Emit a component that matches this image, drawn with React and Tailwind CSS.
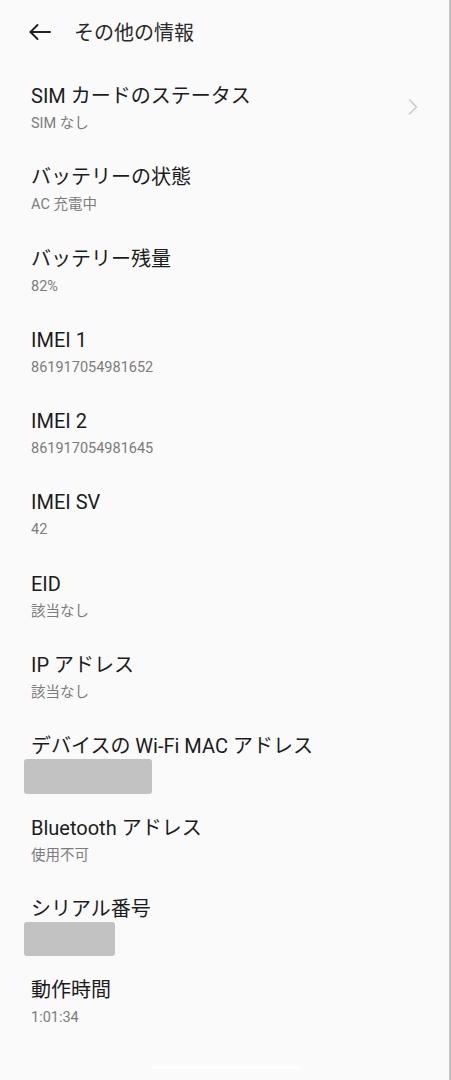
import React from 'react';

const rows = [
  { title: 'SIM カードのステータス', sub: 'SIM なし', chevron: true },
  { title: 'バッテリーの状態', sub: 'AC 充電中' },
  { title: 'バッテリー残量', sub: '82%' },
  { title: 'IMEI 1', sub: '861917054981652' },
  { title: 'IMEI 2', sub: '861917054981645' },
  { title: 'IMEI SV', sub: '42' },
  { title: 'EID', sub: '該当なし' },
  { title: 'IP アドレス', sub: '該当なし' },
  { title: 'デバイスの Wi-Fi MAC アドレス', hidden: 'w-[128px] h-[35px]' },
  { title: 'Bluetooth アドレス', sub: '使用不可' },
  { title: 'シリアル番号', hidden: 'w-[91px] h-[34px]' },
  { title: '動作時間', sub: '1:01:34' },
];

const BackArrow = () => (
  <svg width="24" height="18" viewBox="0 0 24 18" fill="none" stroke="#222" strokeWidth="2" strokeLinecap="round" strokeLinejoin="round">
    <path d="M22 9H2.5" />
    <path d="M9.5 2L2.5 9l7 7" />
  </svg>
);

const Chevron = () => (
  <svg width="12" height="18" viewBox="0 0 12 18" fill="none" stroke="#c9c9c9" strokeWidth="1.6" strokeLinecap="round" strokeLinejoin="round">
    <path d="M2.5 2l7 7-7 7" />
  </svg>
);

const InfoRow = ({ title, sub, chevron, hidden }) => (
  <div className="relative h-[81.3px] pt-[15px] pl-[31px] pr-[40px]">
    <div className="text-[20px] leading-[26px] text-[#1c1c1c]">{title}</div>
    {sub && <div className="mt-[5px] text-[14.5px] leading-[20px] text-[#7c7c7c]">{sub}</div>}
    {hidden && <div className={`-ml-[7px] rounded-[3px] bg-[#c2c2c2] ${hidden}`} />}
    {chevron && (
      <div className="absolute right-[30px] top-[30px]">
        <Chevron />
      </div>
    )}
  </div>
);

export default function App() {
  return (
    <div
      className="relative w-[451px] h-[1080px] overflow-hidden bg-[#fafafa] border-r-2 border-[#c4c4c4]"
      style={{ fontFamily: 'Roboto, "Noto Sans CJK JP", sans-serif' }}
    >
      <div className="h-[68px] flex items-start pt-[23px] pl-[28px]">
        <BackArrow />
        <span className="ml-[22px] -mt-[3px] text-[20px] leading-[26px] text-[#2a2a2a]">その他の情報</span>
      </div>
      <div className="flex flex-col">
        {rows.map((r, i) => (
          <InfoRow key={i} {...r} />
        ))}
      </div>
      <div className="absolute left-[152px] bottom-[11px] w-[148px] h-[3px] rounded-full bg-white" />
    </div>
  );
}
